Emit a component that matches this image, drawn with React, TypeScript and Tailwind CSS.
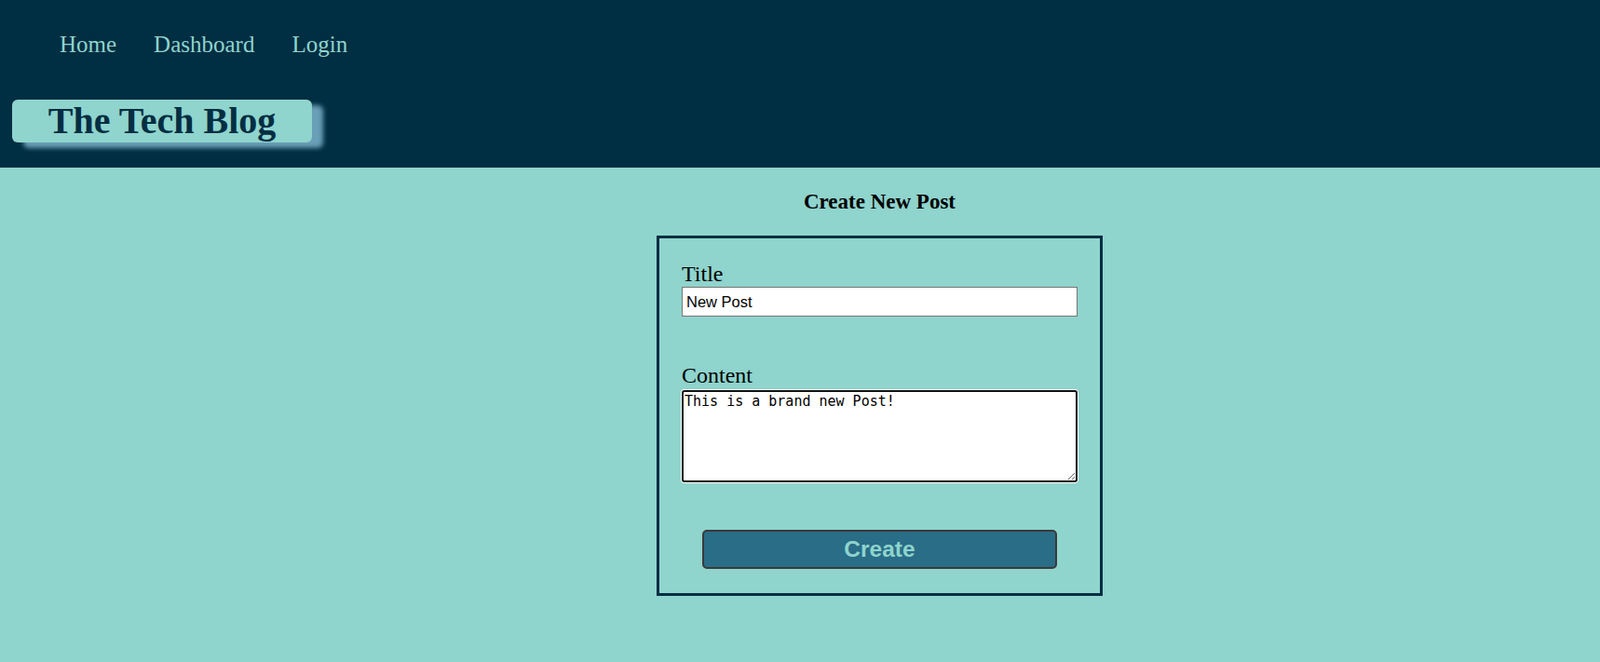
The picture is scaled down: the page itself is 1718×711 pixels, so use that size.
import React from "react";

const NavLinks: React.FC = () => (
  <nav className="flex gap-[40px] pl-[64px] pt-[34px] text-[25px] leading-[28px] text-[#8fd4cd]">
    <a href="#">Home</a>
    <a href="#">Dashboard</a>
    <a href="#">Login</a>
  </nav>
);

const NewPostForm: React.FC = () => (
  <form className="mt-[23px] w-[479px] border-[3px] border-[#002e42] px-[24px] pt-[25px] pb-[26px]">
    <label htmlFor="title" className="block text-[24px] leading-[27px] text-black">
      Title
    </label>
    <input
      id="title"
      type="text"
      defaultValue="New Post"
      className="block h-[32px] w-full border border-[#767676] bg-white px-[4px] text-[16.5px] text-black font-['Liberation_Sans',Arial,sans-serif] outline-none"
    />
    <label htmlFor="content" className="mt-[50px] block text-[24px] leading-[27px] text-black">
      Content
    </label>
    <textarea
      id="content"
      defaultValue="This is a brand new Post!"
      className="mt-[2px] block h-[99px] w-full rounded-[3px] border-2 border-[#101010] bg-white px-[1px] pt-[2px] text-[15px] leading-[17px] text-black shadow-[0_0_0_1px_#ffffff] outline-none font-['DejaVu_Sans_Mono',monospace]"
    />
    <button
      type="button"
      className="mx-auto mt-[51px] block h-[42px] w-[381px] rounded-[5px] border-2 border-[#3a3a3a] bg-[#2a6d87] text-[24.5px] font-bold text-[#8fd4cd] font-['Liberation_Sans',Arial,sans-serif]"
    >
      Create
    </button>
  </form>
);

export default function App() {
  return (
    <div className="min-h-screen bg-[#8fd4cd] font-['Liberation_Serif','Times_New_Roman',serif]">
      <header className="h-[180px] bg-[#002e42]">
        <NavLinks />
        <div className="ml-[13px] mt-[45px] h-[46px] w-[322px] rounded-[6px] bg-[#8fd4cd] text-center text-[40px] font-bold leading-[46px] text-[#002e42] shadow-[12px_6px_5px_#6a9fb8]">
          The Tech Blog
        </div>
      </header>
      <main className="flex flex-col items-center pl-[171px] pb-[40px]">
        <h2 className="pt-[24px] text-[23px] font-bold leading-[26px] text-black">Create New Post</h2>
        <NewPostForm />
      </main>
    </div>
  );
}
